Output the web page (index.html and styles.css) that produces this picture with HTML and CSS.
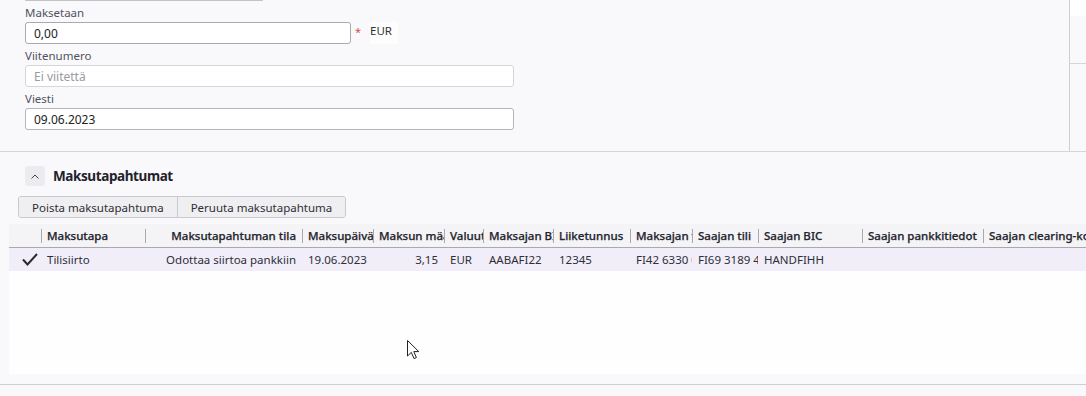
FILE: index.html
```html
<!DOCTYPE html>
<html lang="fi">
<head>
    <meta charset="UTF-8">
    <meta name="viewport" content="width=device-width, initial-scale=1.0">
    <title>Maksu</title>
    <link rel="stylesheet" href="styles.css">
</head>
<body>

<!-- Payment form -->
<div class="form-area">
    <div class="form">
        <div class="top-field"><span></span></div>

        <div class="field-label">Maksetaan</div>
        <div class="amount-row">
            <input type="text" class="input input-amount" value="0,00">
            <span class="required">*</span>
            <span class="currency">EUR</span>
        </div>

        <div class="field-label">Viitenumero</div>
        <input type="text" class="input input-wide input-light" placeholder="Ei viitettä">

        <div class="field-label">Viesti</div>
        <input type="text" class="input input-wide" value="09.06.2023">
    </div>
    <div class="side">
        <div class="side-top"></div>
    </div>
</div>

<!-- Payment events -->
<div class="payments">
    <div class="section-title">
        <button class="collapse-btn">
            <svg width="8" height="5" viewBox="0 0 8 5"><polyline points="0.5,4.5 4,1 7.5,4.5" fill="none" stroke="#444" stroke-width="1"/></svg>
        </button>
        <h2>Maksutapahtumat</h2>
    </div>

    <div class="btn-group">
        <button class="tool-btn">Poista maksutapahtuma</button>
        <button class="tool-btn">Peruuta maksutapahtuma</button>
    </div>

    <div class="table-wrap">
        <table class="grid">
            <colgroup>
                <col style="width: 32px">
                <col style="width: 104px">
                <col style="width: 157px">
                <col style="width: 71px">
                <col style="width: 71px">
                <col style="width: 39px">
                <col style="width: 70px">
                <col style="width: 77px">
                <col style="width: 62px">
                <col style="width: 66px">
                <col style="width: 104px">
                <col style="width: 121px">
                <col style="width: 140px">
            </colgroup>
            <thead>
                <tr>
                    <th></th>
                    <th>Maksutapa</th>
                    <th class="right">Maksutapahtuman tila</th>
                    <th>Maksupäivä</th>
                    <th>Maksun määrä</th>
                    <th>Valuutta</th>
                    <th>Maksajan BIC</th>
                    <th>Liiketunnus</th>
                    <th>Maksajan tili</th>
                    <th>Saajan tili</th>
                    <th>Saajan BIC</th>
                    <th>Saajan pankkitiedot</th>
                    <th>Saajan clearing-koodi</th>
                </tr>
            </thead>
            <tbody>
                <tr class="selected">
                    <td class="check">
                        <svg width="16" height="13" viewBox="0 0 16 13"><polyline points="1,6.5 5.5,11.5 15,1" fill="none" stroke="#2a2a35" stroke-width="2"/></svg>
                    </td>
                    <td>Tilisiirto</td>
                    <td class="right">Odottaa siirtoa pankkiin</td>
                    <td>19.06.2023</td>
                    <td class="right">3,15</td>
                    <td>EUR</td>
                    <td>AABAFI22</td>
                    <td>12345</td>
                    <td>FI42 6330 0010 0000 01</td>
                    <td>FI69 3189 4000 0001 23</td>
                    <td>HANDFIHH</td>
                    <td></td>
                    <td></td>
                </tr>
            </tbody>
        </table>
    </div>

    <div class="bottom-line"></div>
</div>

<!-- mouse pointer from the capture -->
<svg class="pointer" width="13" height="20" viewBox="0 0 13 20">
    <path d="M0.5 0.5 L0.5 16 L4.3 12.4 L7 18.6 L9.4 17.6 L6.8 11.6 L11.8 11.6 Z" fill="#fff" stroke="#222" stroke-width="1"/>
</svg>

</body>
</html>
```

FILE: styles.css
```css
/* Base */
body {
    margin: 0;
    font-family: 'Noto Sans', 'Open Sans', sans-serif;
    font-size: 11.5px;
    color: #2e2e38;
    background: #f9f9fb;
    position: relative;
    overflow: hidden;
}

/* Form area */
.form-area {
    display: flex;
    height: 151px;
    border-bottom: 1px solid #d6d6da;
}

.form {
    flex: 1;
    padding-left: 25px;
}

.top-field {
    width: 236px;
    height: 0;
    border: 1px solid #c4c4c8;
    border-top: none;
    border-radius: 0 0 3px 3px;
}

.top-field span {
    display: block;
    margin-left: 28px;
    height: 1px;
    border-left: 1px solid #c4c4c8;
}

.field-label {
    padding-top: 4px;
    line-height: 16px;
    margin-bottom: 1px;
    color: #51515f;
    font-size: 11.5px;
}

.input {
    display: block;
    box-sizing: border-box;
    height: 22px;
    margin: 0;
    padding: 0 8px;
    border: 1px solid #a9a9b0;
    border-radius: 3px;
    background: #fff;
    font-family: inherit;
    font-size: 12px;
    color: #222;
    outline: none;
}

.input::placeholder {
    color: #9a9aa2;
}

.input-amount {
    width: 326px;
}

.input-wide {
    width: 489px;
    border-color: #b4b4ba;
}

.input-light {
    border-color: #d6d6da;
}

.amount-row {
    display: flex;
    align-items: flex-start;
}

.required {
    color: #d05050;
    margin-left: 4px;
    font-size: 11px;
    line-height: 14px;
    padding-top: 3px;
}

.currency {
    margin-left: 9px;
    line-height: 18px;
    color: #333;
    padding: 0 6px 4px 0;
    background: #fdfdfe;
}

.side {
    width: 16px;
    border-left: 1px solid #cfcfd3;
}

.side-top {
    height: 63px;
    border-bottom: 1px solid #d6d6da;
    background: linear-gradient(#ffffff 16px, transparent 16px);
}

/* Payment events */
.payments {
    padding-top: 14px;
}

.section-title {
    display: flex;
    align-items: center;
    padding-left: 25px;
    height: 20px;
}

.collapse-btn {
    width: 20px;
    height: 20px;
    padding: 0;
    border: none;
    border-radius: 3px;
    background: #ececf0;
    display: flex;
    align-items: center;
    justify-content: center;
}

.section-title h2 {
    margin: 0 0 0 8px;
    font-size: 13.5px;
    font-weight: 700;
    letter-spacing: -0.4px;
    color: #22222c;
}

.btn-group {
    display: flex;
    margin: 10px 0 0 18px;
    width: max-content;
    border: 1px solid #cacace;
    border-radius: 3px;
    overflow: hidden;
}

.tool-btn {
    height: 20px;
    padding: 0 13px;
    border: none;
    background: #efeff1;
    font-family: inherit;
    font-size: 11.5px;
    color: #2e2e38;
}

.tool-btn + .tool-btn {
    border-left: 1px solid #cacace;
}

/* Grid */
.table-wrap {
    margin: 6px 0 0 9px;
    height: 150px;
    background: #fefefe;
    overflow: hidden;
}

.grid {
    border-collapse: separate;
    border-spacing: 0;
    table-layout: fixed;
    width: 1114px;
}

.grid th,
.grid td {
    padding: 0 6px;
    white-space: nowrap;
    overflow: hidden;
    text-overflow: clip;
    text-align: left;
}

.grid th {
    position: relative;
    height: 23px;
    background: #f4f4f7;
    border-bottom: 1px solid #a9a9b0;
    font-weight: 500;
    color: #24242e;
    -webkit-text-stroke: 0.25px #24242e;
}

.grid th + th::before {
    content: '';
    position: absolute;
    left: 0;
    top: 5px;
    height: 14px;
    border-left: 1px solid #a9a9b0;
}

.grid td {
    height: 23px;
    background: #f1eef9;
    color: #2e2e38;
}

.grid .right {
    text-align: right;
}

.grid td.check {
    padding: 0 0 0 13px;
}

.grid td.check svg {
    display: block;
}

.bottom-line {
    margin-top: 10px;
    border-top: 1px solid #d0d0d4;
}

.pointer {
    position: absolute;
    left: 407px;
    top: 340px;
}
```
